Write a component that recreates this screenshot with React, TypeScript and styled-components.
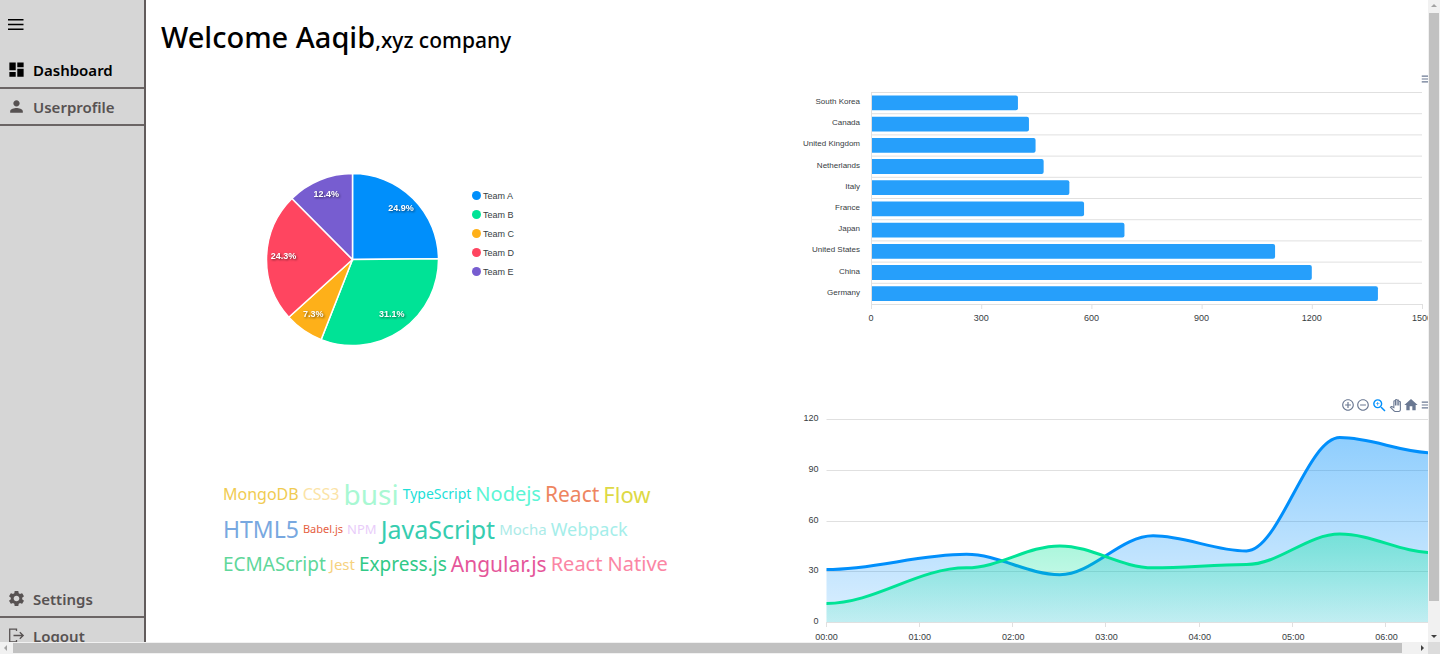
import React from "react";
import styled, { createGlobalStyle } from "styled-components";
import {
  MdAddCircleOutline,
  MdDashboard,
  MdHome,
  MdMenu,
  MdOutlinePanTool,
  MdPerson,
  MdRemoveCircleOutline,
  MdSettings,
  MdZoomIn,
} from "react-icons/md";

const uiFont = `"Segoe UI", "Noto Sans", "Open Sans", sans-serif`;
const chartFont = `"Liberation Sans", Arial, sans-serif`;

const GlobalStyle = createGlobalStyle`
  * { box-sizing: border-box; }
  body { margin: 0; background: #fff; color: #000; font-family: ${uiFont}; }
  button { border: 0; padding: 0; background: none; color: inherit; font: inherit; cursor: pointer; }
`;

const Shell = styled.div`
  display: grid;
  grid-template-columns: minmax(0, 1fr) 12px;
  grid-template-rows: minmax(0, 1fr) 12px;
  height: 100vh;
  overflow: hidden;
`;

const Page = styled.div`
  display: flex;
  overflow: hidden;
`;

const Sidebar = styled.aside`
  flex: none;
  display: flex;
  flex-direction: column;
  width: 146px;
  height: calc(100vh + 1px);
  background: #d6d6d6;
  border-right: 2px solid #625c5c;
`;

const MenuButton = styled.button`
  display: flex;
  align-items: center;
  height: 52px;
  padding: 0 0 3px 8px;
`;

const NavGroup = styled.nav<{ $end?: boolean }>`
  display: flex;
  flex-direction: column;
  margin-top: ${(p) => (p.$end ? "auto" : "0")};
`;

const NavLink = styled.a<{ $active?: boolean }>`
  display: flex;
  align-items: center;
  gap: 7px;
  height: 37px;
  padding-left: 7px;
  border-bottom: 2px solid #6b6565;
  color: ${(p) => (p.$active ? "#000" : "#575252")};
  font-size: 15px;
  font-weight: 600;
  text-decoration: none;
`;

const Main = styled.main`
  flex: 1;
  min-width: 0;
`;

const Title = styled.h1`
  margin: 0;
  height: 72px;
  padding-left: 15px;
  font-size: 29px;
  font-weight: 500;
  line-height: 74px;
  white-space: nowrap;

  small {
    font-size: 21px;
  }
`;

const Board = styled.div`
  display: grid;
  grid-template-columns: minmax(0, 1fr) minmax(0, 1fr);
  grid-template-rows: 326px 320px;
`;

const PiePanel = styled.section`
  display: flex;
  align-items: center;
  gap: 33px;
  padding: 49px 0 0 120px;
  align-self: center;
`;

const Legend = styled.ul`
  display: flex;
  flex-direction: column;
  gap: 7px;
  margin: 0 0 52px;
  padding: 0;
  list-style: none;
  font: 9px/12px ${chartFont};
  color: #373d3f;
`;

const LegendItem = styled.li<{ $color: string }>`
  display: flex;
  align-items: center;
  gap: 2px;

  &::before {
    content: "";
    width: 9px;
    height: 9px;
    border-radius: 50%;
    background: ${(p) => p.$color};
  }
`;

const ChartPanel = styled.section`
  width: calc(100% + 6px);

  svg {
    display: block;
  }

  text {
    font-family: ${chartFont};
    font-size: 9px;
    fill: #373d3f;
  }

  text.category {
    font-size: 8px;
  }
`;

const Toolbar = styled.div`
  display: flex;
  justify-content: flex-end;
  align-items: center;
  gap: 1px;
  height: 14px;
  color: #6a7892;
`;

const Tool = styled.button<{ $active?: boolean }>`
  display: flex;
  color: ${(p) => (p.$active ? "#008ffb" : "inherit")};
`;

const Cloud = styled.section`
  padding: 78px 0 0 77px;
`;

const CloudRow = styled.div`
  display: flex;
  align-items: center;
  gap: 4px;
  height: 35px;
  white-space: nowrap;
`;

const Word = styled.span<{ $size: number; $color: string }>`
  font-size: ${(p) => p.$size}px;
  line-height: 32px;
  color: ${(p) => p.$color};
`;

const ScrollTrack = styled.div<{ $vertical?: boolean }>`
  display: flex;
  flex-direction: ${(p) => (p.$vertical ? "column" : "row")};
  background: #f1f1f1;
`;

const ScrollArrow = styled.button<{ $dim?: boolean }>`
  flex: none;
  display: flex;
  align-items: center;
  justify-content: center;
  width: 12px;
  height: 12px;
  color: ${(p) => (p.$dim ? "#a3a3a3" : "#404040")};
`;

const ScrollThumb = styled.div<{ $part: number }>`
  flex: ${(p) => p.$part} 0 0;
  margin: 1px;
  background: #c1c1c1;
`;

const ScrollRest = styled.div<{ $part: number }>`
  flex: ${(p) => p.$part} 0 0;
`;

const Corner = styled.div`
  background: #dcdcdc;
`;

const teams = [
  { name: "Team A", value: 44, color: "#008ffb" },
  { name: "Team B", value: 55, color: "#00e396" },
  { name: "Team C", value: 13, color: "#feb019" },
  { name: "Team D", value: 43, color: "#ff4560" },
  { name: "Team E", value: 22, color: "#775dd0" },
];

function Pie() {
  const total = teams.reduce((sum, t) => sum + t.value, 0);
  const c = 86.5;
  const r = 86;
  const at = (angle: number, radius: number) => [
    c + radius * Math.sin(angle),
    c - radius * Math.cos(angle),
  ];
  let sum = 0;
  const slices = teams.map((t) => {
    const start = (sum / total) * Math.PI * 2;
    sum += t.value;
    const end = (sum / total) * Math.PI * 2;
    const [x1, y1] = at(start, r);
    const [x2, y2] = at(end, r);
    const [tx, ty] = at((start + end) / 2, 69);
    return {
      ...t,
      d: `M${c} ${c}L${x1} ${y1}A${r} ${r} 0 0 1 ${x2} ${y2}Z`,
      tx,
      ty,
      label: ((t.value / total) * 100).toFixed(1) + "%",
    };
  });
  return (
    <svg width="173" height="173" role="img" aria-label="Share per team">
      {slices.map((s) => (
        <path key={s.name} d={s.d} fill={s.color} stroke="#fff" strokeWidth="1.5" />
      ))}
      {slices.map((s) => (
        <text
          key={s.name}
          x={s.tx}
          y={s.ty + 1}
          textAnchor="middle"
          fill="#fff"
          fontFamily="Liberation Sans, Arial, sans-serif"
          fontSize="9"
          fontWeight="700"
          filter="drop-shadow(1px 1px 1px rgba(0,0,0,.55))"
        >
          {s.label}
        </text>
      ))}
    </svg>
  );
}

const countries: [string, number][] = [
  ["South Korea", 400],
  ["Canada", 430],
  ["United Kingdom", 448],
  ["Netherlands", 470],
  ["Italy", 540],
  ["France", 580],
  ["Japan", 690],
  ["United States", 1100],
  ["China", 1200],
  ["Germany", 1380],
];

function BarChart() {
  const left = 84;
  const top = 6;
  const width = 551;
  const row = 21.2;
  const bottom = top + row * countries.length;
  return (
    <svg width="660" height="260" role="img" aria-label="Value per country">
      {countries.map(([name, value], i) => {
        const y = top + i * row;
        const w = (value / 1500) * width;
        return (
          <g key={name}>
            <path d={`M${left} ${y + 0.5}H${left + width}`} stroke="#e0e0e0" />
            <path
              d={`M${left} ${y + 3.5}h${w - 2}q2 0 2 2v10.8q0 2 -2 2h${2 - w}z`}
              fill="#269ffb"
            />
            <text className="category" x={left - 11} y={y + 12} textAnchor="end">
              {name}
            </text>
          </g>
        );
      })}
      <path
        d={`M${left} ${bottom + 0.5}H${left + width}M${left + 0.5} ${top}V${bottom}`}
        stroke="#e0e0e0"
        fill="none"
      />
      {[0, 300, 600, 900, 1200, 1500].map((v) => {
        const x = left + (v / 1500) * width;
        return (
          <g key={v}>
            <path d={`M${x + 0.5} ${bottom}v5`} stroke="#e0e0e0" />
            <text x={x} y={bottom + 17} textAnchor="middle">
              {v}
            </text>
          </g>
        );
      })}
    </svg>
  );
}

const hours = [0, 1.5, 2.5, 3.5, 4.5, 5.5, 6.5];
const series = [
  { id: "one", color: "#008ffb", values: [31, 40, 28, 51, 42, 109, 100], from: 0.44, to: 0.14 },
  { id: "two", color: "#00e396", values: [11, 32, 45, 32, 34, 52, 41], from: 0.36, to: 0.12 },
];

function AreaChart() {
  const left = 39.5;
  const top = 7;
  const height = 203;
  const hour = 93.33;
  const x = (h: number) => left + h * hour;
  const y = (v: number) => top + height * (1 - v / 120);
  const curve = (values: number[]) =>
    values.reduce((d, v, i) => {
      if (i === 0) return `M${x(0)} ${y(v)}`;
      const x0 = x(hours[i - 1]);
      const x1 = x(hours[i]);
      const reach = (x1 - x0) * 0.35;
      return `${d}C${x0 + reach} ${y(values[i - 1])} ${x1 - reach} ${y(v)} ${x1} ${y(v)}`;
    }, "");
  return (
    <svg width="660" height="240" role="img" aria-label="Two series over time">
      <defs>
        {series.map((s) => (
          <linearGradient key={s.id} id={s.id} x1="0" y1="0" x2="0" y2="1">
            <stop offset="0" stopColor={s.color} stopOpacity={s.from} />
            <stop offset="1" stopColor={s.color} stopOpacity={s.to} />
          </linearGradient>
        ))}
      </defs>
      {[0, 30, 60, 90, 120].map((v) => (
        <g key={v}>
          <path d={`M${left} ${Math.round(y(v)) + 0.5}H660`} stroke="#e0e0e0" />
          <text x={left - 8} y={y(v) + 2} textAnchor="end">
            {v}
          </text>
        </g>
      ))}
      {series.map((s) => (
        <g key={s.id}>
          <path d={`${curve(s.values)}V${y(0)}H${left}Z`} fill={`url(#${s.id})`} />
          <path d={curve(s.values)} fill="none" stroke={s.color} strokeWidth="3" />
        </g>
      ))}
      {[0, 1, 2, 3, 4, 5, 6].map((h) => (
        <g key={h}>
          <path d={`M${Math.round(x(h)) - 0.5} ${y(0)}v5`} stroke="#e0e0e0" />
          <text x={x(h)} y={y(0) + 18} textAnchor="middle">{`0${h}:00`}</text>
        </g>
      ))}
    </svg>
  );
}

const cloud: [string, number, string][][] = [
  [
    ["MongoDB", 16, "#f0cb52"],
    ["CSS3", 16, "#fbe3a6"],
    ["busi", 28, "#a9f8d3"],
    ["TypeScript", 14, "#22dfd8"],
    ["Nodejs", 20, "#5cf5d5"],
    ["React", 21, "#ee8560"],
    ["Flow", 22, "#ded945"],
  ],
  [
    ["HTML5", 23, "#78a8e0"],
    ["Babel.js", 11, "#e5603f"],
    ["NPM", 13, "#e9cdfa"],
    ["JavaScript", 25, "#36cdb0"],
    ["Mocha", 15, "#acebe8"],
    ["Webpack", 18, "#a5eeea"],
  ],
  [
    ["ECMAScript", 19, "#5fd79b"],
    ["Jest", 15, "#f6d27e"],
    ["Express.js", 19, "#31c987"],
    ["Angular.js", 21, "#e5569a"],
    ["React Native", 20, "#fb86a4"],
  ],
];

const arrows = {
  up: "M1 5L4 2L7 5Z",
  down: "M1 3L4 6L7 3Z",
  left: "M5 1L2 4L5 7Z",
  right: "M3 1L6 4L3 7Z",
};

function Arrow({ to, dim }: { to: keyof typeof arrows; dim?: boolean }) {
  return (
    <ScrollArrow $dim={dim} aria-label={`Scroll ${to}`}>
      <svg width="8" height="8">
        <path d={arrows[to]} fill="currentColor" />
      </svg>
    </ScrollArrow>
  );
}

export default function App() {
  return (
    <>
      <GlobalStyle />
      <Shell>
        <Page>
          <Sidebar>
            <MenuButton aria-label="Toggle menu">
              <svg width="16" height="11">
                <path d="M0 .75h15.500M0 5.500h15.500M0 10.250h15.500" stroke="#000" strokeWidth="1.500" />
              </svg>
            </MenuButton>
            <NavGroup aria-label="Pages">
              <NavLink href="#dashboard" $active>
                <MdDashboard size={19} />
                Dashboard
              </NavLink>
              <NavLink href="#userprofile">
                <MdPerson size={19} />
                Userprofile
              </NavLink>
            </NavGroup>
            <NavGroup $end aria-label="Account">
              <NavLink href="#settings">
                <MdSettings size={19} />
                Settings
              </NavLink>
              <NavLink href="#logout">
                <svg width="19" height="19" fill="none" stroke="currentColor" strokeWidth="1.300">
                  <path d="M9.500 5V3.200H2.700V16H9.500V14" />
                  <path d="M6.500 9.500H16M12.800 6.200L16.200 9.500L12.800 12.800" />
                </svg>
                Logout
              </NavLink>
            </NavGroup>
          </Sidebar>
          <Main>
            <Title>
              Welcome Aaqib<small>,xyz company</small>
            </Title>
            <Board>
              <PiePanel>
                <Pie />
                <Legend>
                  {teams.map((t) => (
                    <LegendItem key={t.name} $color={t.color}>
                      {t.name}
                    </LegendItem>
                  ))}
                </Legend>
              </PiePanel>
              <ChartPanel>
                <Toolbar>
                  <Tool aria-label="Menu">
                    <MdMenu size={14} />
                  </Tool>
                </Toolbar>
                <BarChart />
              </ChartPanel>
              <Cloud>
                {cloud.map((row, i) => (
                  <CloudRow key={i}>
                    {row.map(([word, size, color]) => (
                      <Word key={word} $size={size} $color={color}>
                        {word}
                      </Word>
                    ))}
                  </CloudRow>
                ))}
              </Cloud>
              <ChartPanel>
                <Toolbar>
                  <Tool aria-label="Zoom in">
                    <MdAddCircleOutline size={14} />
                  </Tool>
                  <Tool aria-label="Zoom out">
                    <MdRemoveCircleOutline size={14} />
                  </Tool>
                  <Tool aria-label="Selection zoom" $active>
                    <MdZoomIn size={17} />
                  </Tool>
                  <Tool aria-label="Pan">
                    <MdOutlinePanTool size={13} />
                  </Tool>
                  <Tool aria-label="Reset zoom">
                    <MdHome size={16} />
                  </Tool>
                  <Tool aria-label="Menu">
                    <MdMenu size={14} />
                  </Tool>
                </Toolbar>
                <AreaChart />
              </ChartPanel>
            </Board>
          </Main>
        </Page>
        <ScrollTrack $vertical>
          <Arrow to="up" dim />
          <ScrollThumb $part={588} />
          <ScrollRest $part={28} />
          <Arrow to="down" />
        </ScrollTrack>
        <ScrollTrack>
          <Arrow to="left" dim />
          <ScrollThumb $part={1389} />
          <ScrollRest $part={13} />
          <Arrow to="right" />
        </ScrollTrack>
        <Corner />
      </Shell>
    </>
  );
}
